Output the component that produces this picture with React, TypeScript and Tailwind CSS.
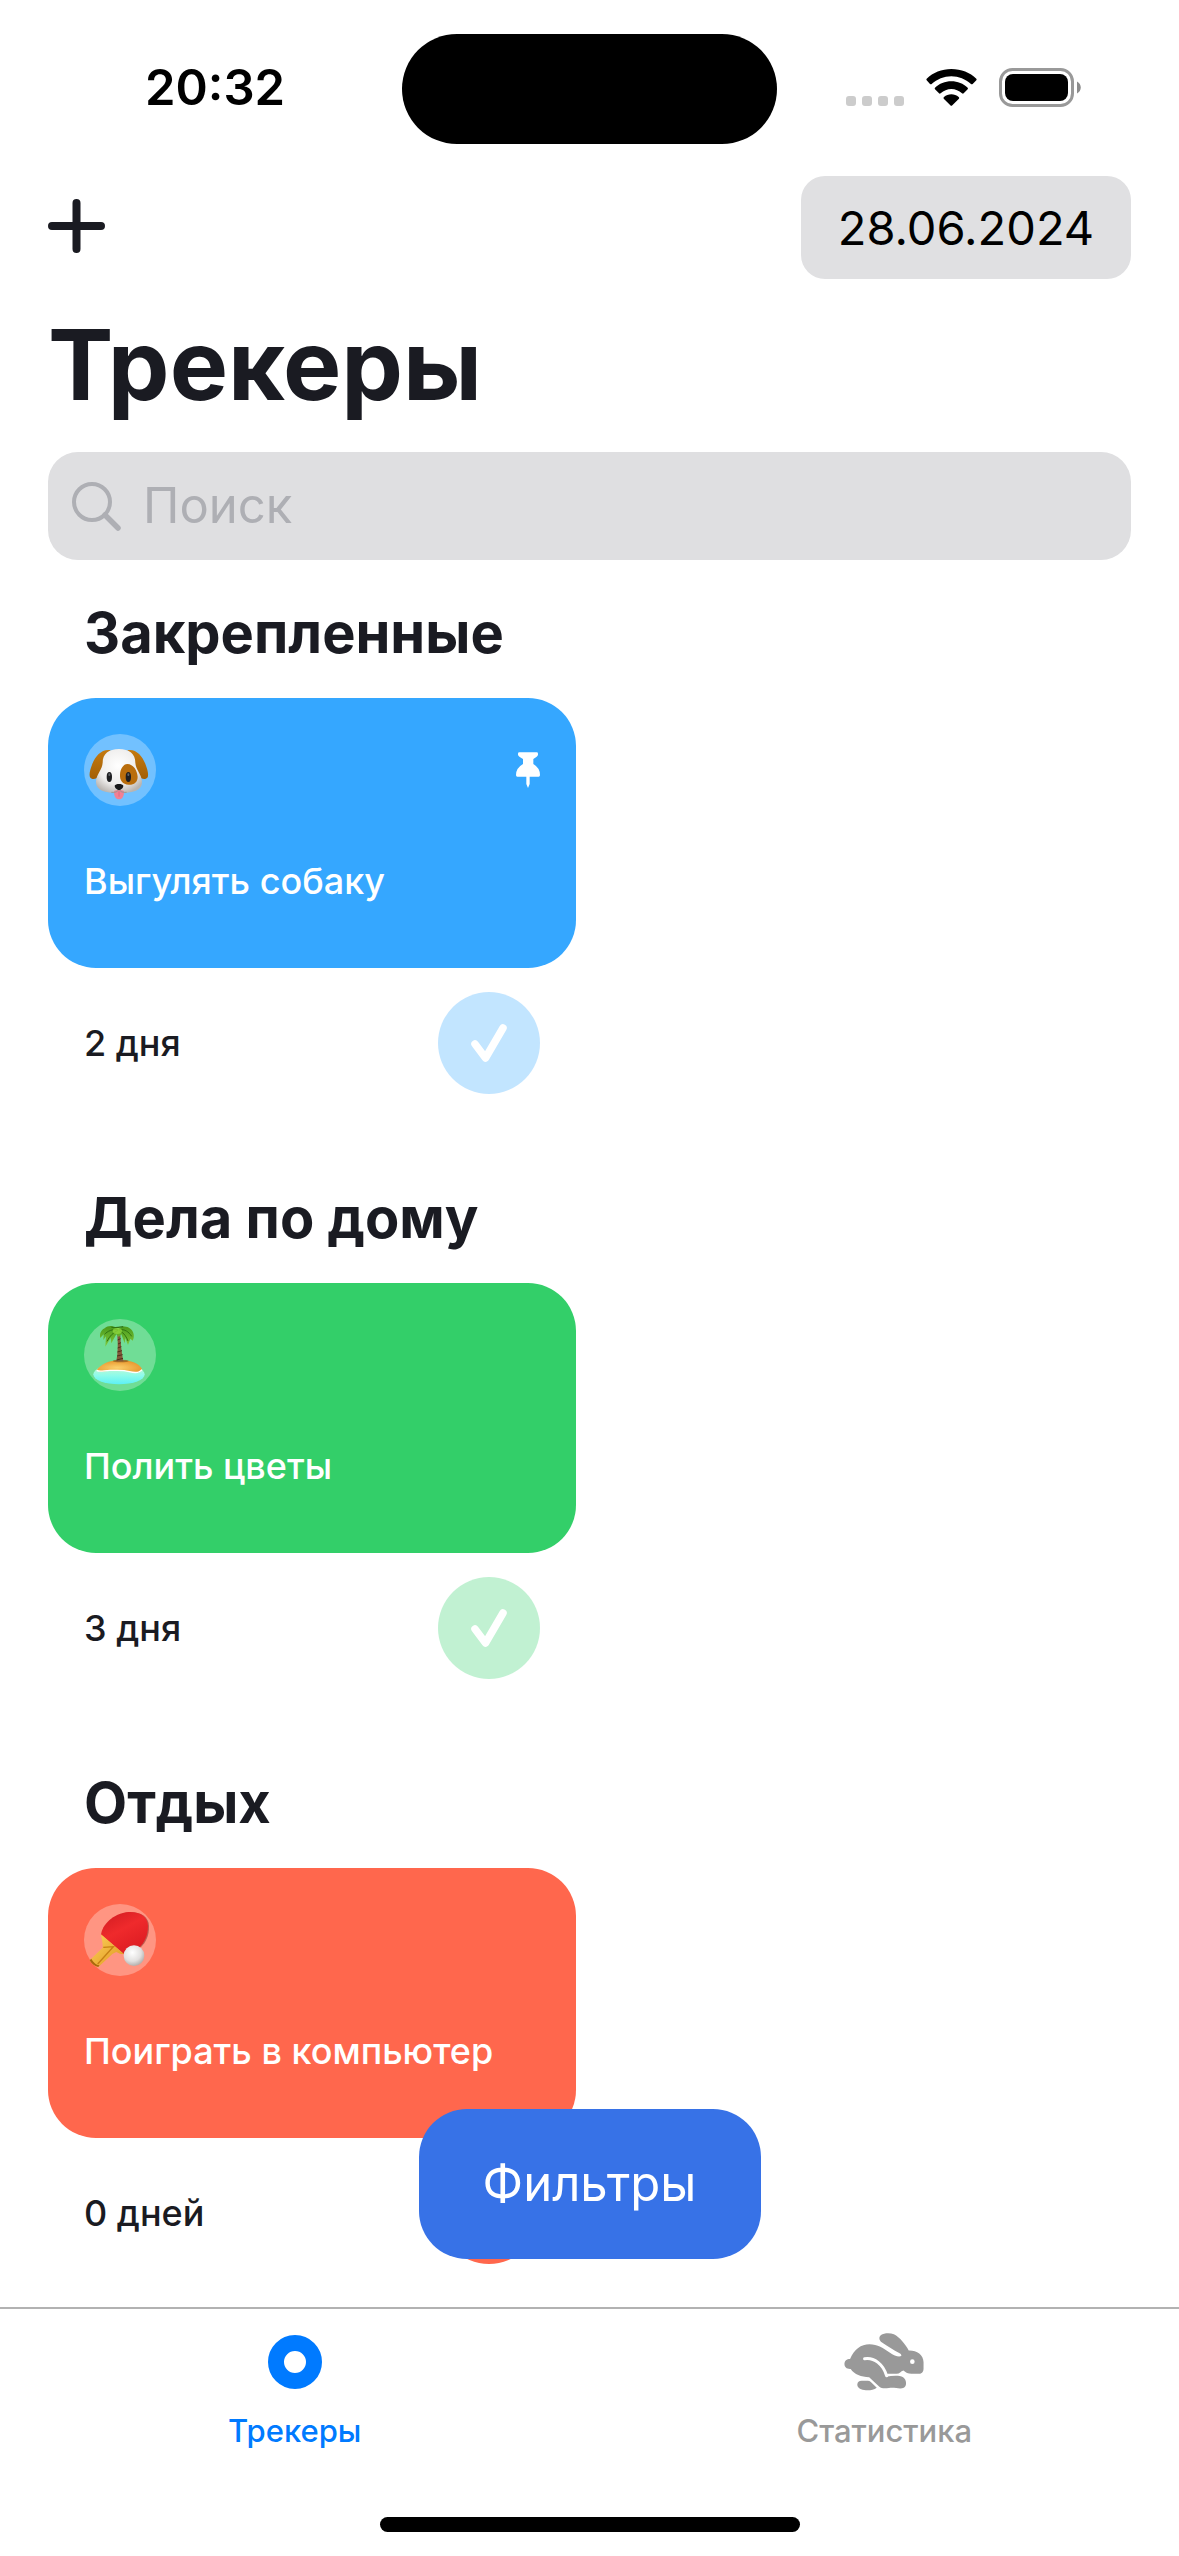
import { useState } from "react";
import type { ReactNode } from "react";

type Tracker = {
  section: string;
  title: string;
  days: string;
  emoji: ReactNode;
  card: string;
  button: string;
  done: boolean;
  pinned?: boolean;
};

function DogEmoji() {
  return (
    <svg viewBox="42 42 216 216" className="size-full" role="img" aria-label="Собака">
      <defs>
        <radialGradient id="dogHead" cx="0.48" cy="0.38" r="0.65">
          <stop offset="0" stopColor="#ffffff" />
          <stop offset="0.65" stopColor="#eeedec" />
          <stop offset="1" stopColor="#b9b4b0" />
        </radialGradient>
        <linearGradient id="dogEar" x1="0" y1="0" x2="0" y2="1">
          <stop offset="0" stopColor="#c47a10" />
          <stop offset="1" stopColor="#a35f06" />
        </linearGradient>
      </defs>
      <path d="M122 91C96 86 76 108 66 134C60 150 56 166 61 173C68 180 80 177 87 168C98 148 100 116 122 91Z" fill="url(#dogEar)" />
      <path d="M172 91C198 86 217 108 227 134C233 150 237 166 232 173C225 180 213 177 206 168C195 148 194 116 172 91Z" fill="url(#dogEar)" />
      <path d="M147 87C116 87 98 102 98 128C97 150 78 162 78 186C78 212 104 219 147 219C190 219 216 212 216 186C216 162 197 150 196 128C196 102 178 87 147 87Z" fill="url(#dogHead)" />
      <path d="M172 132C190 132 202 152 203 170C203 187 191 195 176 194C158 193 149 181 150 164C151 147 160 132 172 132Z" fill="#b96d0c" />
      <ellipse cx="118" cy="171" rx="8" ry="15" fill="#1e1f22" />
      <ellipse cx="175" cy="171" rx="8" ry="15" fill="#1e1f22" />
      <ellipse cx="118" cy="164" rx="3" ry="4" fill="#606469" />
      <ellipse cx="175" cy="164" rx="3" ry="4" fill="#606469" />
      <path d="M132 213C140 209 154 209 162 213C162 228 158 238 147 238C136 238 132 228 132 213Z" fill="#f37f93" />
      <path d="M147 214V230" stroke="#d75f78" strokeWidth="2" />
      <path d="M124 217C135 218 143 216 147 208C151 216 159 218 170 217" fill="none" stroke="#9c9692" strokeWidth="3" />
      <path d="M134 197C136 190 158 190 160 197C160 204 152 210 147 210C142 210 134 204 134 197Z" fill="#17181a" />
    </svg>
  );
}

function IslandEmoji() {
  return (
    <svg viewBox="42 42 216 216" className="size-full" role="img" aria-label="Остров">
      <defs>
        <linearGradient id="sea" x1="0" y1="0" x2="0" y2="1">
          <stop offset="0" stopColor="#d9f7c8" />
          <stop offset="0.55" stopColor="#8efbea" />
          <stop offset="1" stopColor="#5cf0f5" />
        </linearGradient>
        <radialGradient id="sand" cx="0.45" cy="0.6" r="0.6">
          <stop offset="0" stopColor="#fbd06c" />
          <stop offset="1" stopColor="#e8962c" />
        </radialGradient>
        <linearGradient id="leaf" x1="0" y1="0" x2="0" y2="1">
          <stop offset="0" stopColor="#4a9a1c" />
          <stop offset="1" stopColor="#7fc83a" />
        </linearGradient>
      </defs>
      <ellipse cx="147" cy="208" rx="77" ry="30" fill="url(#sea)" />
      <path d="M80 196C92 178 116 166 150 166C184 166 208 176 216 192C212 206 194 204 178 200C156 194 140 198 122 197C104 196 92 204 80 196Z" fill="url(#sand)" />
      <path d="M80 196C92 203 104 195 122 196C140 197 156 194 178 200C194 204 208 205 216 194" fill="none" stroke="#ffffff" strokeWidth="4" />
      <ellipse cx="152" cy="168" rx="24" ry="4" fill="#8a5a1d" opacity="0.7" />
      <path d="M142 90H151C152 118 155 142 160 169H139C144 142 144 116 142 90Z" fill="#83593a" />
      <path d="M143 105L152 101M144 117L153 113M143 129L154 125M142 141L156 137M141 153L158 149M140 165L159 160" stroke="#4c301d" strokeWidth="3" />
      <path d="M144 72C132 60 114 60 104 70C92 76 88 88 91 99L101 88L100 105L108 94L106 125L122 98L124 115L139 88L146 96L154 88L164 115L166 99L174 120L181 101L188 107C195 94 191 78 181 71C170 62 156 62 144 72Z" fill="url(#leaf)" />
      <path d="M144 74C128 72 112 78 104 88M144 76C130 82 118 94 111 109M148 74C164 72 176 80 185 94M149 77C162 84 170 96 174 108" fill="none" stroke="#2f7412" strokeWidth="3" />
      <path d="M124 66C134 70 142 68 160 65" fill="none" stroke="#2f7412" strokeWidth="4" />
      <ellipse cx="142" cy="78" rx="14" ry="9" fill="#92d93f" opacity="0.75" />
    </svg>
  );
}

function PaddleEmoji() {
  return (
    <svg viewBox="42 42 216 216" className="size-full overflow-visible" role="img" aria-label="Настольный теннис">
      <defs>
        <linearGradient id="rubber" x1="0" y1="0" x2="0.6" y2="1">
          <stop offset="0" stopColor="#cf1b20" />
          <stop offset="0.5" stopColor="#ef2a2c" />
          <stop offset="1" stopColor="#dd1c22" />
        </linearGradient>
        <linearGradient id="handle" x1="0" y1="0" x2="1" y2="1">
          <stop offset="0" stopColor="#ffd45e" />
          <stop offset="1" stopColor="#dd941c" />
        </linearGradient>
        <radialGradient id="ball" cx="0.42" cy="0.35" r="0.7">
          <stop offset="0" stopColor="#ffffff" />
          <stop offset="0.6" stopColor="#e2e0df" />
          <stop offset="1" stopColor="#aaa6a4" />
        </radialGradient>
      </defs>
      <path d="M97 134C98 108 130 72 178 67C212 65 236 80 237 108C238 138 226 158 214 170L164 194Z" fill="#8f3a32" opacity="0.6" />
      <path d="M93 134C96 106 128 70 176 66C210 64 234 80 234 108C234 138 222 158 210 170L162 192Z" fill="url(#rubber)" />
      <path d="M93 133L162 192C154 193 146 190 139 186L128 191L85 231C76 230 64 222 59 211L98 173C99 160 95 146 93 133Z" fill="url(#handle)" />
      <path d="M100 172L130 170L83 222" fill="none" stroke="#c67f14" strokeWidth="4" />
      <path d="M59 211C64 220 74 229 85 231L88 226C76 224 68 214 64 206Z" fill="#a9660e" />
      <circle cx="192" cy="197" r="31" fill="url(#ball)" />
    </svg>
  );
}

function PinIcon() {
  return (
    <svg viewBox="78 65 72 108" className="h-9 w-6" fill="white" aria-hidden="true">
      <path d="M88 66H140Q144 66 144 70V73Q143 78 130 86V101Q150 113 150 134Q150 139 146 139H119V161L114 173L109 161V139H82Q78 139 78 134Q78 113 99 101V86Q85 78 84 73V70Q84 66 88 66Z" />
    </svg>
  );
}

const trackers: Tracker[] = [
  {
    section: "Закрепленные",
    title: "Выгулять собаку",
    days: "2 дня",
    emoji: <DogEmoji />,
    card: "bg-[#35a7ff]",
    button: "bg-[#35a7ff]/30",
    done: true,
    pinned: true,
  },
  {
    section: "Дела по дому",
    title: "Полить цветы",
    days: "3 дня",
    emoji: <IslandEmoji />,
    card: "bg-[#33cf69]",
    button: "bg-[#33cf69]/30",
    done: true,
  },
  {
    section: "Отдых",
    title: "Поиграть в компьютер",
    days: "0 дней",
    emoji: <PaddleEmoji />,
    card: "bg-[#ff674d]",
    button: "bg-[#ff674d]",
    done: false,
  },
];

function StatusBar() {
  return (
    <div className="grid grid-cols-[1fr_375px_1fr] items-center pt-[34px]">
      <div className="pb-[3px] pl-7 text-center text-[49px] leading-[60px] font-semibold text-black">20:32</div>
      <div className="h-[110px] rounded-full bg-black" />
      <div className="flex items-end justify-center pr-[30px] pb-[3px]">
        <div className="mr-[22px] mb-px flex gap-1.5">
          {[0, 1, 2, 3].map((dot) => (
            <span key={dot} className="size-2.5 rounded-[3px] bg-[#cccccc]" />
          ))}
        </div>
        <svg viewBox="0 0 153 111" className="mr-[22px] mb-px h-[37px] w-[51px]" fill="black" aria-hidden="true">
          <path d="M76 0C106 0 132 11 151 29Q153 31 151 34L140 45Q137 47 135 45C119 31 98 22 76 22C54 22 33 31 17 45Q15 47 12 45L2 34Q0 31 2 29C21 11 47 0 76 0Z" />
          <path d="M76 37C95 37 112 44 125 56Q127 58 125 61L113 73Q111 75 108 73C99 65 88 60 76 60C64 60 53 65 44 73Q41 75 39 73L27 61Q25 58 27 56C40 44 57 37 76 37Z" />
          <path d="M76 76C84 76 92 79 98 84Q101 87 98 90L79 109Q76 112 73 109L54 90Q51 87 54 84C60 79 68 76 76 76Z" />
        </svg>
        <svg viewBox="0 0 82 39" className="h-[39px] w-[82px]" aria-hidden="true">
          <rect x="1.5" y="1.5" width="72" height="36" rx="12" fill="none" stroke="#999999" strokeWidth="3" />
          <rect x="6" y="6" width="63" height="27" rx="8" fill="black" />
          <path d="M78 13.500C83 16 83 23 78 25.500Z" fill="#8c8c8c" />
        </svg>
      </div>
    </div>
  );
}

function TrackerSection({ tracker }: { tracker: Tracker }) {
  return (
    <section>
      <h2 className="h-14 px-9 text-[56px] leading-[54px] font-bold">{tracker.section}</h2>
      <div className="mt-9 grid grid-cols-2 gap-[27px]">
        <article>
          <div className={`min-h-[270px] rounded-[48px] p-9 ${tracker.card}`}>
            <div className="flex items-center justify-between">
              <div className="size-[72px] rounded-full bg-white/30">{tracker.emoji}</div>
              {tracker.pinned && <PinIcon />}
            </div>
            <p className="mt-12 text-[36px] leading-[54px] font-medium text-white">{tracker.title}</p>
          </div>
          <div className="mt-6 flex items-center justify-between px-9">
            <p className="text-[36px] leading-[54px] font-medium">{tracker.days}</p>
            <button
              type="button"
              aria-label={tracker.done ? "Выполнено" : "Отметить"}
              className={`flex size-[102px] items-center justify-center rounded-full ${tracker.button}`}
            >
              <svg viewBox="0 0 36 38" className="h-[38px] w-9" fill="none" stroke="white" strokeLinecap="round" strokeLinejoin="round" aria-hidden="true">
                {tracker.done ? (
                  <path d="M4 20L14.500 34L32 4" strokeWidth="7.500" />
                ) : (
                  <path d="M18 3V35M2 19H34" strokeWidth="4" />
                )}
              </svg>
            </button>
          </div>
        </article>
      </div>
    </section>
  );
}

function RabbitIcon() {
  return (
    <svg viewBox="132 125 240 176" className="h-[58px] w-20" fill="currentColor" aria-hidden="true">
      <path d="M149 204C162 174 182 159 208 159C232 159 251 171 269 184C283 194 297 199 304 195C306 192 303 188 298 186C282 178 262 164 246 154C237 148 235 137 243 131C252 125 270 124 282 129C300 138 317 160 327 178C350 177 372 190 372 214V234Q372 249 354 249H335C326 249 317 245 311 239Q305 240 301 245Q297 249 290 249H262L258 258C278 254 298 253 310 259C321 266 322 286 312 291C301 297 284 289 267 292C252 294 244 293 238 288L207 259C183 258 162 251 151 234C139 235 132 228 132 219C132 210 139 204 149 204Z" />
      <path d="M184 270H203Q208 270 212 274L230 291C220 298 206 300 192 298C178 296 171 289 171 281Q172 270 184 270Z" />
      <path d="M193 203C222 198 250 220 260 255" fill="none" stroke="white" strokeWidth="9" strokeLinecap="round" />
      <circle cx="338" cy="212" r="7" fill="white" />
    </svg>
  );
}

export default function App() {
  const [query, setQuery] = useState("");
  return (
    <div className="flex min-h-screen flex-col bg-white font-['Inter',sans-serif] text-[#1a1b22]">
      <StatusBar />
      <header className="px-12 pt-8">
        <div className="flex items-center justify-between">
          <button type="button" aria-label="Добавить трекер" className="flex h-[103px] items-center pb-[3px]">
            <svg viewBox="0 0 57 54" className="h-[54px] w-[57px]" stroke="currentColor" strokeWidth="8" strokeLinecap="round" aria-hidden="true">
              <path d="M28.500 4V50M4 27H53" />
            </svg>
          </button>
          <button type="button" className="h-[103px] w-[330px] rounded-3xl bg-[#e0e0e2] text-[47px] leading-[60px] text-black">
            28.06.2024
          </button>
        </div>
        <h1 className="mt-[26px] text-[98px] leading-[120px] font-bold">Трекеры</h1>
        <label className="mt-[27px] flex h-[108px] items-center rounded-[30px] bg-[#dfdfe1] pl-6">
          <svg viewBox="0 0 49 49" className="size-[49px] shrink-0" fill="none" stroke="#aeafb4" strokeLinecap="round" aria-hidden="true">
            <circle cx="20" cy="20" r="18" strokeWidth="4" />
            <path d="M33 33L46 46" strokeWidth="5.500" />
          </svg>
          <input
            type="search"
            aria-label="Поиск"
            placeholder="Поиск"
            value={query}
            onChange={(event) => setQuery(event.target.value)}
            className="ml-[22px] min-w-0 flex-1 bg-transparent text-[49px] leading-[60px] outline-none placeholder:text-[#aeafb4]"
          />
        </label>
      </header>

      <main className="relative flex-1 px-12 pt-[46px]">
        <div className="flex flex-col gap-[97px]">
          {trackers.map((tracker) => (
            <TrackerSection key={tracker.section} tracker={tracker} />
          ))}
        </div>
        <button
          type="button"
          className="absolute bottom-12 left-1/2 h-[150px] w-[342px] -translate-x-1/2 rounded-[48px] bg-[#3772e7] text-[49px] leading-[60px] text-white"
        >
          Фильтры
        </button>
      </main>

      <footer className="border-t-2 border-[#b2b2b2] bg-white pb-6">
        <nav className="grid grid-cols-2 text-[31px] leading-9 font-medium">
          <a href="#trackers" aria-current="page" className="flex flex-col items-center pt-[23px] text-[#007aff]">
            <span className="flex h-[60px] items-center">
              <svg viewBox="0 0 54 54" className="size-[54px]" fill="none" stroke="currentColor" aria-hidden="true">
                <circle cx="27" cy="27" r="19" strokeWidth="16" />
              </svg>
            </span>
            <span className="mt-[21px]">Трекеры</span>
          </a>
          <a href="#stats" className="flex flex-col items-center pt-[23px] text-[#999999]">
            <span className="flex h-[60px] items-center">
              <RabbitIcon />
            </span>
            <span className="mt-[21px]">Статистика</span>
          </a>
        </nav>
        <div className="mx-auto mt-[68px] h-[15px] w-[420px] rounded-full bg-black" />
      </footer>
    </div>
  );
}
